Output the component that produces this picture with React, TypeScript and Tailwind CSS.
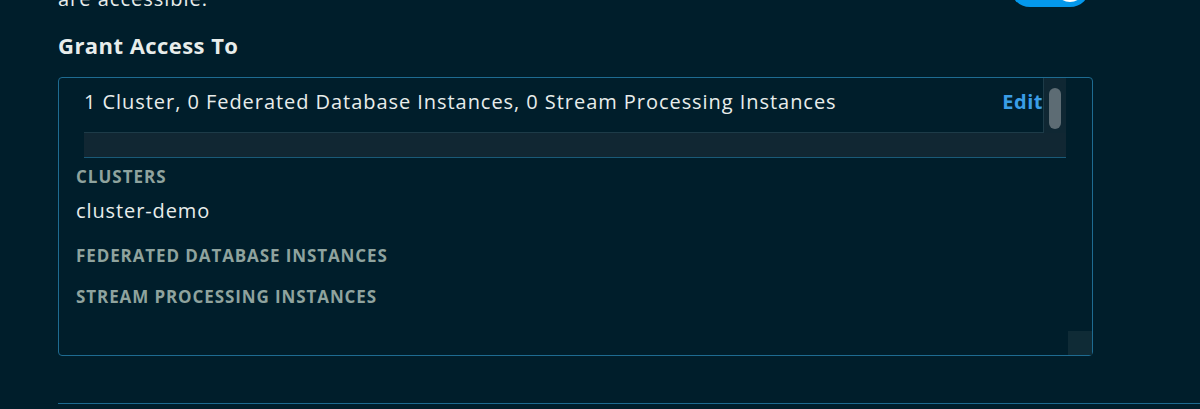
import React from "react";

const font = { fontFamily: "'Open Sans', Lato, sans-serif" };

export default function App() {
  return (
    <div className="w-[1200px] h-[409px] overflow-hidden bg-[#001e2b] text-[#e8edeb]" style={font}>
      <div className="pl-[58px]">
        <div className="flex items-end justify-between pr-[110px] -mt-[13px] h-[24px]">
          <span className="text-[20px] leading-[24px] tracking-[1px] text-[#e8edeb] self-start">are accessible.</span>
          <div className="w-[80px] h-[40px] shrink-0 rounded-full bg-[#0498ec] flex items-center justify-end pr-[5px] mb-[4px]">
            <div className="w-[30px] h-[30px] rounded-full bg-white" />
          </div>
        </div>
        <div className="mt-[20px] text-[22px] leading-[28px] font-bold tracking-[0.45px] text-[#e8edeb]">Grant Access To</div>
        <div className="mt-[18px] w-[1035px] h-[279px] border border-[#1e6b91] rounded-[4px] flex flex-col">
          <div className="ml-[25px] mr-[26px] flex flex-col">
            <div className="flex">
              <div className="flex-1 h-[55px] border-b border-[#1d3b48] flex items-center justify-between">
                <span className="text-[20px] leading-[24px] tracking-[0.95px] -mt-[6px]">1 Cluster, 0 Federated Database Instances, 0 Stream Processing Instances</span>
                <span className="text-[20px] leading-[24px] tracking-[0.5px] -mt-[6px] font-bold text-[#3a9de6]">Edit</span>
              </div>
              <div className="w-[23px] bg-[#0f2733] border-l border-[#1d3b48] flex justify-center pt-[10px]">
                <div className="w-[12px] h-[41px] rounded-full bg-[#5d6c74]" />
              </div>
            </div>
            <div className="h-[25px] bg-[#112733] border-b border-[#1a5a78]" />
          </div>
          <div className="pl-[17px] pt-[8px] flex flex-col">
            <div className="text-[17px] leading-[22px] font-bold uppercase tracking-[1px] text-[#8fa39e]">Clusters</div>
            <div className="mt-[11px] text-[20px] leading-[24px] tracking-[0.9px] text-[#e8edeb]">cluster-demo</div>
            <div className="mt-[22px] text-[17px] leading-[22px] font-bold uppercase tracking-[0.9px] text-[#8fa39e]">Federated Database Instances</div>
            <div className="mt-[19px] text-[17px] leading-[22px] font-bold uppercase tracking-[0.9px] text-[#8fa39e]">Stream Processing Instances</div>
          </div>
          <div className="mt-auto flex justify-end">
            <div className="w-[24px] h-[24px] bg-[#0f2b36]" />
          </div>
        </div>
        <div className="mt-[47px] h-px bg-[#1e6b91]" />
      </div>
    </div>
  );
}
